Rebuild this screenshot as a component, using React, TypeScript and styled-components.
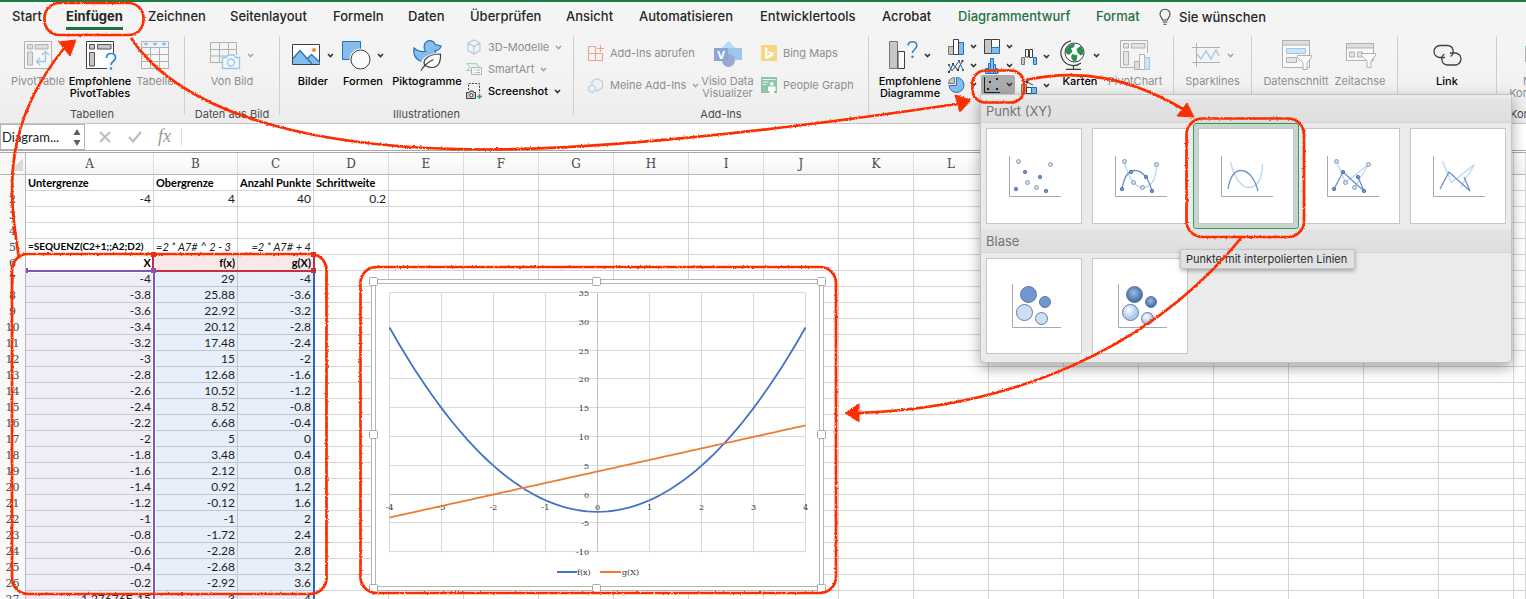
import React from "react";
import styled, { createGlobalStyle, css } from "styled-components";

const ui = `Inter, Roboto, "Liberation Sans", sans-serif`;
const slab = `"DejaVu Serif", "Liberation Serif", serif`;
const sheetFont = `Lato, "Open Sans", sans-serif`;

const Global = createGlobalStyle`
  * { box-sizing: border-box; }
  body { margin: 0; background: #fff; font-family: ${ui}; }
  button { font: inherit; color: inherit; background: none; border: 0; padding: 0; cursor: default; }
  svg { display: block; flex: none; overflow: visible; }
`;

/* ---------- frame ---------- */
const Page = styled.div`
  position: relative;
  display: flex;
  flex-direction: column;
  height: 100vh;
  overflow: hidden;
`;
const Ribbon = styled.header`
  flex: none;
  border-top: 2px solid #1b7d45;
  border-bottom: 1px solid #c6c6c6;
  background: linear-gradient(#f5f5f5, #f3f3f3 60%, #ececec);
`;
const Tabs = styled.nav`
  display: flex;
  height: 34px;
  padding-left: 12px;
`;
const Tab = styled.button<{ $w: number; $active?: boolean; $green?: boolean }>`
  flex: none;
  width: ${(p) => p.$w}px;
  height: 28px;
  text-align: left;
  white-space: nowrap;
  font-size: 13px;
  line-height: 29px;
  font-weight: ${(p) => (p.$active ? 700 : 500)};
  color: ${(p) => (p.$green ? "#1f7044" : "#262626")};
`;
const TabText = styled.span<{ $active?: boolean }>`
  display: inline-block;
  height: 28px;
  ${(p) => p.$active && css`border-bottom: 3px solid #1f7044;`}
`;
const Hint = styled.button`
  display: flex;
  align-items: center;
  gap: 8px;
  height: 29px;
  margin-left: 5px;
  font-size: 13px;
  font-weight: 500;
  color: #262626;
  white-space: nowrap;
`;
const Groups = styled.div`
  display: flex;
  height: 87px;
  overflow: hidden;
`;
const Group = styled.section<{ $w: number }>`
  flex: none;
  width: ${(p) => p.$w}px;
`;
const Divider = styled.span`
  flex: none;
  width: 1px;
  height: 79px;
  background: #cfcfcf;
`;
const GroupBody = styled.div<{ $pad?: number; $center?: boolean }>`
  display: flex;
  height: 72px;
  padding-left: ${(p) => p.$pad || 0}px;
  justify-content: ${(p) => (p.$center ? "center" : "flex-start")};
`;
const GroupLabel = styled.div<{ $left?: number }>`
  font-size: 11px;
  line-height: 13px;
  color: #4c4c4c;
  text-align: ${(p) => (p.$left ? "left" : "center")};
  padding-left: ${(p) => p.$left || 0}px;
  white-space: nowrap;
`;
const Big = styled.button<{ $w: number; $off?: boolean }>`
  display: flex;
  flex: none;
  flex-direction: column;
  align-items: center;
  width: ${(p) => p.$w}px;
  padding-top: 4px;
  font-size: 11px;
  line-height: 12px;
  white-space: nowrap;
  color: ${(p) => (p.$off ? "#8e8e8e" : "#000")};
  font-weight: ${(p) => (p.$off ? 400 : 500)};
`;
const IconRow = styled.span`
  display: flex;
  align-items: center;
  gap: 7px;
  height: 30px;
  margin-bottom: 5px;
`;
const List = styled.div<{ $w: number; $row: number; $top?: number; $pad?: number }>`
  display: grid;
  flex: none;
  align-content: start;
  grid-auto-rows: ${(p) => p.$row}px;
  width: ${(p) => p.$w}px;
  padding: ${(p) => p.$top || 0}px 0 0 ${(p) => p.$pad || 0}px;
`;
const Small = styled.button<{ $off?: boolean }>`
  display: flex;
  align-items: center;
  gap: 6px;
  font-size: 11px;
  white-space: nowrap;
  color: ${(p) => (p.$off ? "#8e8e8e" : "#000")};
  font-weight: ${(p) => (p.$off ? 400 : 500)};
`;
const Mini = styled.button<{ $on?: boolean }>`
  display: flex;
  align-items: center;
  gap: 6px;
  padding-left: 3px;
  border-radius: 2px;
  background: ${(p) => (p.$on ? "#ababab" : "none")};
`;

/* ---------- formula bar ---------- */
const FormulaBar = styled.div`
  display: flex;
  flex: none;
  align-items: center;
  height: 29px;
  background: #fff;
  border-bottom: 3px double #a8a8a8;
`;
const NameBox = styled.div`
  display: flex;
  align-items: center;
  width: 85px;
  height: 26px;
  border: 1px solid #b4b4b4;
`;
const NameInput = styled.input`
  width: 72px;
  padding: 0 0 0 1px;
  border: 0;
  background: none;
  font: 13px ${sheetFont};
  color: #222;
`;
const BarButtons = styled.div`
  display: flex;
  align-items: center;
  gap: 16px;
  width: 97px;
  padding-left: 13px;
  border-right: 1px solid #dcdcdc;
`;
const FormulaInput = styled.input`
  flex: 1;
  min-width: 0;
  height: 24px;
  margin-left: 6px;
  border: 0;
  background: #fff;
`;

/* ---------- sheet ---------- */
const Sheet = styled.main`
  position: relative;
  flex: 1;
  min-height: 0;
  overflow: hidden;
`;
const Grid = styled.table`
  table-layout: fixed;
  width: 100%;
  min-width: 1514px;
  border-collapse: separate;
  border-spacing: 0;
  font: 12px ${sheetFont};
  color: #1c1c1c;
`;
const ColHead = styled.th`
  height: 22px;
  padding: 1px 0 0;
  border-right: 1px solid #dedede;
  border-bottom: 1px solid #b8b8b8;
  background: linear-gradient(#fff, #f5f5f5);
  font: 12px ${slab};
  color: #4a4a4a;
`;
const Corner = styled(ColHead)`
  border-right-color: #b8b8b8;
  background: linear-gradient(135deg, transparent 50%, #dadada 50%) 11px 6px / 12px 12px no-repeat, #f7f7f7;
`;
const RowHead = styled.th`
  height: 16px;
  padding: 0;
  border-right: 1px solid #b8b8b8;
  background: #f8f8f8;
  font: 11px/15px ${slab};
  color: #4a4a4a;
`;
type Tint = "violet" | "rose" | "blue" | undefined;
const tints = { violet: "#f1edf8", rose: "#f8e8e8", blue: "#e7effa" };
const tintLines = { violet: "#c9c8d4", rose: "#d8c4c6", blue: "#bcc7d6" };
const Cell = styled.td<{ $tint?: Tint; $bold?: boolean; $italic?: boolean; $left?: boolean; $long?: boolean }>`
  height: 16px;
  padding: 0 2px;
  white-space: nowrap;
  line-height: 15px;
  text-align: ${(p) => (p.$left ? "left" : "right")};
  font-size: ${(p) => (p.$long ? 10 : p.$bold || p.$italic ? 11 : 12)}px;
  font-weight: ${(p) => (p.$bold ? 700 : 400)};
  font-style: ${(p) => (p.$italic ? "italic" : "normal")};
  color: ${(p) => (p.$bold ? "#000" : "#1c1c1c")};
  border-right: 1px solid ${(p) => (p.$tint ? tintLines[p.$tint] : "#d4d4d4")};
  border-bottom: 1px solid ${(p) => (p.$tint ? tintLines[p.$tint] : "#d4d4d4")};
  background: ${(p) => (p.$tint ? tints[p.$tint] : "#fff")};
`;
const Overlay = styled.svg`
  position: absolute;
  top: 0;
  left: 0;
  pointer-events: none;
`;
const ChartFrame = styled.figure`
  position: absolute;
  left: 371px;
  top: 126px;
  margin: 0;
  width: 453px;
  height: 312px;
`;

/* ---------- chart menu ---------- */
const Menu = styled.div`
  position: absolute;
  left: 980px;
  top: 94px;
  width: 532px;
  padding: 4px 0 3px;
  border: 1px solid #c4c4c4;
  border-radius: 0 0 5px 5px;
  background: #ebebeb;
  box-shadow: 0 5px 14px rgba(0, 0, 0, 0.35);
`;
const MenuTitle = styled.h2`
  height: 24px;
  margin: 0;
  padding-left: 5px;
  border-bottom: 1px solid #d3d3d3;
  background: linear-gradient(#e4e4e4, #dedede);
  font: 400 13px/25px ${ui};
  color: #757575;
`;
const MenuRow = styled.div`
  display: grid;
  grid-template-columns: repeat(5, 106px);
`;
const Choice = styled.button<{ $on?: boolean }>`
  height: 106px;
  padding: 4px;
  border: 1px solid ${(p) => (p.$on ? "#3d9a68" : "transparent")};
  border-radius: 3px;
  background: ${(p) => (p.$on ? "#c5d6cd" : "none")};
`;
const Card = styled.span`
  display: flex;
  align-items: center;
  justify-content: center;
  width: 96px;
  height: 96px;
  border: 1px solid #c6c6c6;
  background: #fff;
`;
const Tooltip = styled.div`
  position: absolute;
  left: 1180px;
  top: 249px;
  height: 20px;
  padding: 0 7px 0 5px;
  border: 1px solid #c4c4c4;
  border-radius: 2px;
  background: #e0e1e3;
  box-shadow: 0 2px 4px rgba(0, 0, 0, 0.3);
  font-size: 11px;
  line-height: 18px;
  color: #2c2c2c;
  white-space: nowrap;
`;

/* ---------- icons ---------- */
const Ico = ({ w, h, children }: { w: number; h: number; children: React.ReactNode }) => (
  <svg width={w} height={h} viewBox={`0 0 ${w} ${h}`} fill="none" aria-hidden="true">{children}</svg>
);
const Chev = ({ off }: { off?: boolean }) => (
  <Ico w={7} h={5}><path d="M1 1l2.5 2.6L6 1" stroke={off ? "#a6a6a6" : "#333"} strokeWidth="1.6" /></Ico>
);
const B = "#1f72bd", LB = "#86bdec", G = "#b1b1b1", D = "#404040";

const PivotIcon = () => (
  <Ico w={28} h={28}>
    <path d="M.5.5h27v27H.5z" stroke={G} fill="#f6f6f6" />
    <path d="M3.500 3.500h5v4.500h-5zM11 3.500h13V8H11zM3.500 11h5v13h-5z" stroke={G} fill="#dedede" />
    <path d="M13 20.500h8.500V11M16 17l-3.500 3.500L16 24M18 14l3.500-3.500L25 14" stroke="#9cc7e6" strokeWidth="1.300" />
  </Ico>
);
const PivotHelpIcon = () => (
  <Ico w={28} h={30}>
    <path d="M1 2h26v13l-6 13H1z" fill="#fff" />
    <path d="M27.500 13V1.500H.5v27H21" stroke={D} />
    <path d="M3.500 4.500h5V9h-5zM11.500 4.500H25V9H11.500zM3.500 12.500h5V26h-5z" stroke="#555" fill="#c6c6c6" />
    <path d="M20.500 18c0-3 2-4.500 4.500-4.500s4.500 1.600 4.500 4.200c0 3.500-4.500 4-4.500 7.300" stroke="#2b86cf" strokeWidth="1.700" />
    <circle cx="25" cy="28.500" r="1.200" fill="#2b86cf" />
  </Ico>
);
const TableIcon = () => (
  <Ico w={28} h={28}>
    <path d="M.5.5h27v27H.5z" stroke={G} fill="#f6f6f6" />
    <path d="M1 1h26v5H1z" fill="#eaf3fa" />
    <path d="M.5 6.500h27M.5 13.500h27M.5 20.500h27M9.500 6.500v21M18.500 6.500v21" stroke={G} />
    <path d="M2.500 2h5L5 5zM11.500 2h5L14 5zM20.500 2h5L23 5z" fill="#7db8df" />
  </Ico>
);
const TableCamIcon = () => (
  <Ico w={30} h={28}>
    <path d="M12 21.500H.5v-20h26V14M.5 8.500h26M.5 15h17M9.500 1.500v20M18.500 1.500v12" stroke={G} />
    <path d="M12.500 16.500h4l1.500-2.500h6l1.500 2.500h4v11h-17z" fill="#f0f6fb" stroke="#9cc7e6" strokeWidth="1.300" />
    <circle cx="21" cy="21.500" r="3.500" stroke="#9cc7e6" strokeWidth="1.300" />
  </Ico>
);
const PictureIcon = () => (
  <Ico w={28} h={22}>
    <path d="M.5.5h27v20H.5z" fill="#fff" stroke={D} />
    <path d="M1 14.500L8 6.500l7 8 4.500-4.500 8 8v2H1z" fill={LB} />
    <path d="M1 14.500L8 6.500l12 13.500M15.500 14.500L19.500 10.500l8 7.500" stroke={B} strokeWidth="1.200" />
    <circle cx="22" cy="6" r="2" fill="#f08a2c" />
  </Ico>
);
const ShapesIcon = () => (
  <Ico w={28} h={29}>
    <path d="M.5.5h18v18H.5z" fill={LB} stroke={B} />
    <circle cx="18.500" cy="18.500" r="11" fill="#f4f4f4" />
    <circle cx="18.500" cy="18.500" r="9.500" fill="#fafafa" stroke={D} />
  </Ico>
);
const DuckIcon = () => (
  <Ico w={29} h={31}>
    <path d="M1 8c4 3.500 8 4 11.500 3.500-2-3-2-8 1-9.700 3-2 7.500-1.300 8.800 2.700L28 6c-.5 2.500-3 4.500-6 4.500 1.500 3 1.500 6 0 8.500C18 23 9 23 4 19 1 16 .5 11 1 8z" fill={LB} stroke={B} strokeWidth="1.200" />
    <path d="M11 27c-4-5.500 1-12 17.500-13 .5 9-2 15-9 15-3 0-5-.6-6.500-1.500z" fill="#fff" stroke="#f4f4f4" strokeWidth="3" />
    <path d="M12 26c-3-6 2-11.500 15.500-12 .3 8-2 13.500-8.500 13.500-2 0-4-.5-5.500-1.500zM8 30.500c3-5 7-8.500 12.500-11" fill="#fff" stroke={D} strokeWidth="1.200" />
  </Ico>
);
const CubeIcon = () => (
  <Ico w={16} h={16}><path d="M8 1l6 3v7.500L8 15l-6-3.500V4zM2 4l6 3.500L14 4M8 7.500V15" stroke="#a9cbe6" strokeWidth="1.200" /></Ico>
);
const SmartIcon = () => (
  <Ico w={16} h={16}>
    <path d="M.5 2.500h10l3 3.500M.5 2.500L4 6 .5 9.500H5" fill="#d9ecdf" stroke="#a6d3b4" />
    <path d="M5.500 6.500h10v7h-10zM7.500 9h1M10 9h4M7.500 11.500h1M10 11.500h4" fill="#fafafa" stroke={G} />
  </Ico>
);
const ShotIcon = () => (
  <Ico w={16} h={17}>
    <path d="M2.500 7V.5h11V10" stroke="#444" strokeDasharray="2 1.300" />
    <path d="M.5 9.500h2.500l1-1.500h3l1 1.500h1.500v6h-9z" fill="#c9c9c9" stroke={D} />
    <circle cx="5.300" cy="12.300" r="1.600" fill="#fff" stroke={D} />
    <path d="M11 13.500h5M13.500 11v5" stroke="#2aa457" strokeWidth="1.500" />
  </Ico>
);
const AddinGetIcon = () => (
  <Ico w={16} h={17}><path d="M7.500 1.500h-7v14h14v-7H.5M7.500 1.500v14M12.500 0v7M9 3.500h7" stroke="#eda68e" strokeWidth="1.200" /></Ico>
);
const AddinMineIcon = () => (
  <Ico w={16} h={16}>
    <path d="M4 8V4.500L9 1.500l5.500 3v6L9.500 14 8 13" stroke="#b5d0e8" strokeWidth="1.200" />
    <path d="M4 8l3.500 2v3.500L4 15.500.8 13.500V10z" stroke="#b5d0e8" strokeWidth="1.200" />
  </Ico>
);
const VisioIcon = () => (
  <Ico w={28} h={28}>
    <path d="M14.500 0l8 8-8 8-8-8z" fill="#b4dcf3" />
    <path d="M14 7h14v12H14z" fill="#9dc7ec" />
    <circle cx="14.500" cy="19.500" r="6.500" fill="#9aa9cf" />
    <path d="M0 7h14v13H0z" fill="#8ba5d6" />
    <text x="7" y="17.500" textAnchor="middle" fontFamily={ui} fontWeight="700" fontSize="11" fill="#fff">V</text>
  </Ico>
);
const BingIcon = () => (
  <Ico w={16} h={16}><path d="M0 0h16v16H0z" fill="#f6d680" /><path d="M4 2l2.300 1v7.700L9.500 9 8 8.200 7.200 6l5.300 2v2.500L6.300 14 4 12.800z" fill="#fff" /></Ico>
);
const PeopleIcon = () => (
  <Ico w={16} h={16}>
    <path d="M0 0h16v16H0z" fill="#8fc4ac" />
    <path d="M1.500 2.500h13M1.500 5h6M1.500 7.500h4" stroke="#e6f3ed" />
    <circle cx="10.800" cy="6.800" r="1.900" fill="#fff" />
    <path d="M7 9.500h7.500V14H13v2H8.500v-2H7z" fill="#fff" />
  </Ico>
);
const RecChartIcon = () => (
  <Ico w={28} h={29}>
    <path d="M.5.5h8v27h-8z" fill="#c6c6c6" stroke="#777" />
    <path d="M9 10.500h6.500v17H9z" fill="#fafafa" stroke={D} />
    <path d="M19 4.500C19.200 2 21 .8 23.500.8s4.300 1.500 4.300 4c0 3.200-4.300 3.700-4.300 7.200" stroke="#2b86cf" strokeWidth="1.600" />
    <circle cx="23.500" cy="15.800" r="1.200" fill="#2b86cf" />
  </Ico>
);
const ColumnIcon = () => (
  <Ico w={16} h={16}><path d="M.5 7.500h5v8h-5z" fill="#c6c6c6" stroke="#777" /><path d="M10.500 3.500h5v12h-5z" fill={LB} stroke={B} /><path d="M5.500.5h5v15h-5z" fill="#fff" stroke={D} /></Ico>
);
const LineIcon = () => (
  <Ico w={16} h={14}><path d="M1 13l4-8 4.500 6L14.500 2" stroke={D} /><path d="M1 6l3 6 7-10 4 9" stroke={B} /><path d="M0 12h2v2H0zM4 4h2v2H4zM9 10h2v2H9zM13.500 1h2v2h-2z" fill={D} /><path d="M0 5h2v2H0zM10 1h2v2h-2zM14 10h2v2h-2z" fill={B} /></Ico>
);
const PieIcon = () => (
  <Ico w={16} h={16}><path d="M8.500.5a7.500 7.500 0 11-7.500 8h7.500z" fill={LB} stroke={B} /><path d="M6.500 6.500h-6A6 6 0 016.500.5z" fill="#c6c6c6" stroke="#777" /></Ico>
);
const TreeIcon = () => (
  <Ico w={16} h={16}><path d="M.5.500h7v14h-7z" fill="#c6c6c6" stroke={D} /><path d="M7.500.5h8v8h-8z" fill="#fff" stroke={D} /><path d="M7.500 8.500h8v6h-8z" fill={LB} stroke={B} /></Ico>
);
const HistIcon = () => (
  <Ico w={16} h={16}><path d="M1.500 15.500v-5h3v-5h2v-5h3v6h2v4h2v5z" fill={LB} stroke={B} /><path d="M4.500 10v5M6.500 6v9M9.500 7v8M11.500 11v4" stroke={B} /></Ico>
);
const ScatterIcon = () => (
  <Ico w={16} h={16}><path d="M.5 0v15.500H16" stroke="#222" /><path d="M3 11h2v2H3zM5 4h2v2H5zM12 1h2v2h-2zM12 11h2v2h-2z" fill="#222" /><path d="M3 6h2v2H3zM8 8h2v2H8zM12 6h2v2h-2z" fill="#7dc0f5" /></Ico>
);
const FallIcon = () => (
  <Ico w={16} h={16}><path d="M.5 8.500h3v7h-3z" fill="#c6c6c6" stroke="#777" /><path d="M4.500.5h3v7.500h-3zM8.500.5h3v8h-3z" fill="#fff" stroke={D} /><path d="M12.500 8.500h3v7h-3z" fill={LB} stroke={B} /></Ico>
);
const ComboIcon = () => (
  <Ico w={16} h={16}><path d="M.5 6.500h5v9h-5z" fill="#c6c6c6" stroke="#777" /><path d="M5.500 9.500h5v6h-5z" fill="#fff" stroke={D} /><path d="M10.500 9.500h5v6h-5z" fill={LB} stroke={B} /><path d="M1 2l5 2 6 3" stroke={D} /><circle cx="6" cy="4" r="1.500" fill={D} /></Ico>
);
const GlobeIcon = () => (
  <Ico w={25} h={30}>
    <circle cx="13.500" cy="12.500" r="9.500" fill="#fff" stroke={D} />
    <path d="M5 9c2-3.500 5-5.500 9-5l-1 3-3 1.500 1.500 3L8 15l-3.500-2zM15.500 9l4-3c2.500 2 3.500 5 3 8l-3 1.500-3-3zM11 14l5.500 1.500-1 5-3 1-2.500-4z" fill="#2d8f4e" />
    <path d="M10 .8A12.500 12.500 0 1020 23M12.500 25v4M5 29.300h15" stroke={D} strokeWidth="1.200" />
  </Ico>
);
const PivotChartIcon = () => (
  <Ico w={30} h={30}>
    <path d="M14 27.500H.5V.5h27V13" stroke={G} />
    <path d="M3.500 3.500h5V8h-5zM11.500 3.500H25V8H11.500zM3.500 11.500h5V25h-5z" stroke={G} fill="#e4e4e4" />
    <path d="M14.500 21.500h5v8h-5z" fill="#dcdcdc" stroke={G} /><path d="M19.500 14.500h5v15h-5z" fill="#fafafa" stroke={G} /><path d="M24.500 17.500h5v12h-5z" fill="#cfe3f3" stroke="#9cc7e6" />
  </Ico>
);
const SparkIcon = () => (
  <Ico w={28} h={24}><path d="M0 4.500h28M0 19.500h28M4.500 0v24" stroke={G} /><path d="M5 11l4 5 5-8 5 8 5-9 3 6" stroke="#9cc7e6" strokeWidth="1.300" /></Ico>
);
const Funnel = ({ x, y }: { x: number; y: number }) => (
  <path transform={`translate(${x} ${y})`} d="M0 0h14v2L9.500 7.500V14H5.500V7.500L0 2z" fill="#fafafa" stroke={G} />
);
const SlicerIcon = () => (
  <Ico w={28} h={30}>
    <path d="M.5.5h27v27H.5z" fill="#fafafa" stroke={G} /><path d="M.5.5h27V5H.5z" fill="#dedede" stroke={G} />
    <path d="M4.500 8.500h19v5h-19z" fill="#cfe3f3" stroke="#9cc7e6" /><path d="M4.500 17.500h10v5h-10z" fill="#e4e4e4" stroke={G} /><Funnel x={15.500} y={15.500} />
  </Ico>
);
const TimelineIcon = () => (
  <Ico w={28} h={24}>
    <path d="M.5.5h27v17H.5z" fill="#fafafa" stroke={G} /><path d="M.5.5h27V5H.5z" fill="#dedede" stroke={G} />
    <path d="M3.500 9h5v5h-5zM11.500 9h5v5h-5z" fill="#e4e4e4" stroke={G} /><Funnel x={15.500} y={10.500} />
  </Ico>
);
const LinkIcon = () => (
  <Ico w={29} h={21}>
    <path d="M12 12.500H7a6 6 0 010-12h7.500a6 6 0 013 11" stroke={D} strokeWidth="1.300" />
    <path d="M17 8h5a6 6 0 010 12h-7.500a6 6 0 01-3-11" stroke={D} strokeWidth="1.300" />
  </Ico>
);
const CommentIcon = () => (
  <Ico w={28} h={28}><path d="M.5 6.500h27v14H12l-5 6v-6H.5z" stroke={G} /><path d="M0 6h14" stroke="#8fd0a8" strokeWidth="2" /></Ico>
);
const BulbIcon = () => (
  <Ico w={12} h={16}><path d="M3.500 11C3.500 9 1 8 1 5.200a5 5 0 0110 0C11 8 8.500 9 8.500 11zM3.700 13h4.600M4.500 15.200h3" stroke="#444" strokeWidth="1.100" /></Ico>
);

/* ---------- scatter thumbnails ---------- */
const DK = "#6d92c6", LT = "#b9d6f0";
const darkPts = [[7, 34], [16, 17], [31, 22], [37, 36]];
const lightPts = [[9.5, 6.500], [18.500, 27.500], [27.500, 32.500], [41.500, 9.500]];
type Kind = "dots" | "curveDots" | "curve" | "lineDots" | "line";
const Thumb = ({ kind }: { kind: Kind }) => {
  const dots = kind === "dots" || kind.endsWith("Dots");
  return (
    <Ico w={50} h={42}>
      <path d="M.5 1v40.500H52" stroke="#a9a9a9" />
      {kind.startsWith("curve") && (
        <>
          <path d="M9.500 7C13 22 20 32.500 28 32.500S41.500 24 41.500 9" stroke={LT} strokeWidth="1.300" />
          <path d="M7 34C9 22 13 15.500 20 15.500c8 0 14 9 17 20.500" stroke={DK} strokeWidth="1.300" />
        </>
      )}
      {kind.startsWith("line") && (
        <>
          <path d="M9.500 6.500l9 21 23-18-14 23" stroke={LT} strokeWidth="1.300" />
          <path d="M7 34l9-17 21 19-6-14" stroke={DK} strokeWidth="1.300" />
        </>
      )}
      {dots && darkPts.map(([x, y]) => <circle key={x} cx={x} cy={y} r="1.700" fill={DK} stroke="#4a6796" strokeWidth=".8" />)}
      {dots && lightPts.map(([x, y]) => <circle key={x} cx={x} cy={y} r="2" fill="#cfe1f4" stroke="#6c86ad" strokeWidth=".8" />)}
    </Ico>
  );
};
const BubbleThumb = ({ shiny }: { shiny?: boolean }) => {
  const d = shiny ? "url(#bubbleDark)" : "#7097cf";
  const l = shiny ? "url(#bubbleLight)" : "#cbdff5";
  return (
    <Ico w={44} h={46}>
      <defs>
        <radialGradient id="bubbleDark" cx=".45" cy=".4"><stop offset="0" stopColor="#9cbde6" /><stop offset="1" stopColor="#4a72ad" /></radialGradient>
        <radialGradient id="bubbleLight" cx=".4" cy=".35"><stop offset="0" stopColor="#fff" /><stop offset="1" stopColor="#a9c9ee" /></radialGradient>
      </defs>
      <path d="M.5 1v43.500H49" stroke="#a9a9a9" />
      <g stroke="#5a6f94" strokeWidth=".9">
        <circle cx="16.500" cy="11.500" r="8" fill={d} /><circle cx="33" cy="19" r="5.500" fill={d} />
        <circle cx="12.500" cy="29.500" r="8" fill={l} /><circle cx="29.500" cy="35.500" r="6" fill={l} />
      </g>
    </Ico>
  );
};

/* ---------- data ---------- */
const tabs: { t: string; w: number; on?: boolean; green?: boolean }[] = [
  { t: "Start", w: 54 }, { t: "Einfügen", w: 82, on: true }, { t: "Zeichnen", w: 82 }, { t: "Seitenlayout", w: 103 },
  { t: "Formeln", w: 75 }, { t: "Daten", w: 62 }, { t: "Überprüfen", w: 96 }, { t: "Ansicht", w: 73 },
  { t: "Automatisieren", w: 121 }, { t: "Entwicklertools", w: 122 }, { t: "Acrobat", w: 76 },
  { t: "Diagrammentwurf", w: 138, green: true }, { t: "Format", w: 58, green: true },
];
const cols = "ABCDEFGHIJKLMNOPQRS".split("");
const series = Array.from({ length: 20 }, (_, i) => Math.round((-4 + i * 0.2) * 10) / 10);
const f = (x: number) => Math.round((2 * x * x - 3) * 100) / 100;
const g = (x: number) => Math.round((2 * x + 4) * 100) / 100;

type CellData = { v: string | number; bold?: boolean; italic?: boolean; left?: boolean; long?: boolean };
const head = (v: string, left = true): CellData => ({ v, bold: true, left });
const cells: Record<number, CellData[]> = {
  1: ["Untergrenze", "Obergrenze", "Anzahl Punkte", "Schrittweite"].map((v) => head(v)),
  2: [-4, 4, 40, 0.2].map((v) => ({ v })),
  5: [{ ...head("=SEQUENZ(C2+1;;A2;D2)"), long: true }, { v: "=2 * A7# ^ 2 - 3", italic: true, left: true }, { v: "=2 * A7# + 4", italic: true }],
  6: [head("X", false), head("f(x)", false), head("g(X)", false)],
  27: [{ v: "1.27676E-15" }, { v: -3 }, { v: 4 }],
};
series.forEach((x, i) => { cells[7 + i] = [{ v: x }, { v: f(x) }, { v: g(x) }]; });
const tintOf = (row: number, col: number): Tint => {
  if (row === 6 && (col === 1 || col === 2)) return "rose";
  if (row >= 7 && col === 0) return "violet";
  if (row >= 7 && col < 3) return "blue";
  return undefined;
};

/* ---------- chart ---------- */
const px = (x: number) => 226.5 + x * 52;
const py = (y: number) => 215.5 - y * 5.76;
const curve = (fn: (x: number) => number) =>
  Array.from({ length: 81 }, (_, i) => -4 + i / 10).map((x, i) => `${i ? "L" : "M"}${px(x)} ${py(fn(x))}`).join("");

const Chart = () => (
  <ChartFrame>
    <svg width="454" height="314" viewBox="0 0 454 314" role="img" aria-label="f(x), g(X)" fill="none" fontFamily={slab} fontSize="8">
      <path d="M.5.5h452v311H.5z" fill="#fff" stroke="#b5b5b5" />
      <path d="M4.500 4.500h444v303H4.500z" stroke="#b5b5b5" />
      {[35, 30, 25, 20, 15, 10, 5, 0, -5, -10].map((v) => (
        <React.Fragment key={v}>
          <path d={`M${px(-4)} ${Math.round(py(v)) - 0.5}H${px(4)}`} stroke={v ? "#d9d9d9" : "#bfbfbf"} />
          <text x="218" y={py(v) + 3} textAnchor="end" fill="#333">{v}</text>
        </React.Fragment>
      ))}
      {[-4, -3, -2, -1, 0, 1, 2, 3, 4].map((v) => (
        <React.Fragment key={v}>
          <path d={`M${px(v)} ${py(35)}V${py(-10)}`} stroke={v ? "#d9d9d9" : "#bfbfbf"} />
          <text x={px(v)} y="231" textAnchor="middle" fill="#333">{v}</text>
        </React.Fragment>
      ))}
      <path d={curve((x) => 2 * x * x - 3)} stroke="#4472c4" strokeWidth="1.800" />
      <path d={curve((x) => 2 * x + 4)} stroke="#ed7d31" strokeWidth="1.800" />
      <path d="M186 293h20" stroke="#4472c4" strokeWidth="2" />
      <text x="206" y="296" fill="#333">f(x)</text>
      <path d="M229 293h21" stroke="#ed7d31" strokeWidth="2" />
      <text x="251" y="296" fill="#333">g(X)</text>
      {[[2, 2], [225, 2], [450, 2], [2, 155], [450, 155], [2, 309], [225, 309], [450, 309]].map(([x, y]) => (
        <rect key={`${x}-${y}`} x={x - 3.5} y={y - 3.5} width="8" height="8" rx="1" fill="#fff" stroke="#a9a9a9" />
      ))}
    </svg>
  </ChartFrame>
);

const Ranges = () => (
  <Overlay width="320" height="460" viewBox="0 0 320 460" fill="none" aria-hidden="true">
    <path d="M26 119.500h127" stroke="#fff" />
    <path d="M155.500 119V460M152.500 119V460" stroke="#fff" opacity=".8" />
    <path d="M26 118h127M154 118V460" stroke="#8253b8" strokeWidth="2" />
    <path d="M314 118V460" stroke="#2d62c0" strokeWidth="2" />
    <path d="M156 118h156M153 104v11M314 104v11" stroke="#c4313e" strokeWidth="2" />
    <path d="M151 99h5v5h-5zM311 99h5v5h-5zM311 115h5v5h-5z" fill="#c4313e" />
    <path d="M151 115h5v5h-5zM26 115h2v5h-2z" fill="#8253b8" />
  </Overlay>
);

const Marks = () => (
  <Overlay width="1526" height="599" viewBox="0 0 1526 599" fill="none" aria-hidden="true">
    <defs>
      <filter id="chalk" filterUnits="userSpaceOnUse" x="0" y="0" width="1526" height="599">
        <feTurbulence type="fractalNoise" baseFrequency=".6" numOctaves="2" seed="4" />
        <feDisplacementMap in="SourceGraphic" scale="2.500" xChannelSelector="R" yChannelSelector="G" />
      </filter>
    </defs>
    <g stroke="#fb2f05" strokeWidth="2.700" filter="url(#chalk)">
      <rect x="44.500" y="3" width="99" height="32" rx="15" />
      <rect x="12" y="254" width="314.500" height="340" rx="16" />
      <rect x="360.500" y="267" width="475.500" height="326" rx="16" />
      <rect x="972.500" y="70.500" width="51.500" height="32" rx="13" />
      <rect x="1186.500" y="118.500" width="117.500" height="118.500" rx="16" />
      <path d="M19 258C8 190 2 125 65 47" />
      <path d="M131 38C175 105 290 149 485 149.500C600 149 760 133 957 104" />
      <path d="M1026 80C1080 68 1130 78 1183 109" />
      <path d="M1241 238C1150 350 1010 408 858 413" />
      <g fill="#fb2f05" strokeWidth="1">
        <path d="M59 42l17-2-6 16z" />
        <path d="M955 95l16 5-11 12z" />
        <path d="M1187 103l7 14-17-1z" />
        <path d="M859 404l-14 9 14 9z" />
      </g>
    </g>
  </Overlay>
);

export default function App() {
  return (
    <Page>
      <Global />
      <Ribbon>
        <Tabs>
          {tabs.map((t) => (
            <Tab key={t.t} $w={t.w} $active={t.on} $green={t.green}><TabText $active={t.on}>{t.t}</TabText></Tab>
          ))}
          <Hint><BulbIcon />Sie wünschen</Hint>
        </Tabs>
        <Groups>
          <Group $w={184}>
            <GroupBody $pad={9}>
              <Big $w={58} $off><IconRow><PivotIcon /></IconRow>PivotTable</Big>
              <Big $w={66}><IconRow><PivotHelpIcon /></IconRow>Empfohlene<br />PivotTables</Big>
              <Big $w={44} $off><IconRow><TableIcon /></IconRow>Tabelle</Big>
            </GroupBody>
            <GroupLabel>Tabellen</GroupLabel>
          </Group>
          <Divider />
          <Group $w={94}>
            <GroupBody $center>
              <Big $w={70} $off><IconRow><TableCamIcon /><Chev off /></IconRow>Von Bild</Big>
            </GroupBody>
            <GroupLabel>Daten aus Bild</GroupLabel>
          </Group>
          <Divider />
          <Group $w={293}>
            <GroupBody $pad={8}>
              <Big $w={50}><IconRow><PictureIcon /><Chev /></IconRow>Bilder</Big>
              <Big $w={50}><IconRow><ShapesIcon /><Chev /></IconRow>Formen</Big>
              <Big $w={78}><IconRow><DuckIcon /></IconRow>Piktogramme</Big>
              <List $w={106} $row={22}>
                <Small $off><CubeIcon />3D-Modelle<Chev off /></Small>
                <Small $off><SmartIcon />SmartArt<Chev off /></Small>
                <Small><ShotIcon />Screenshot<Chev /></Small>
              </List>
            </GroupBody>
            <GroupLabel>Illustrationen</GroupLabel>
          </Group>
          <Divider />
          <Group $w={294}>
            <GroupBody $pad={14}>
              <List $w={106} $row={32} $top={1}>
                <Small $off><AddinGetIcon />Add-Ins abrufen</Small>
                <Small $off><AddinMineIcon />Meine Add-Ins<Chev off /></Small>
              </List>
              <Big $w={67} $off><IconRow><VisioIcon /></IconRow>Visio Data<br />Visualizer</Big>
              <List $w={106} $row={32} $top={1}>
                <Small $off><BingIcon />Bing Maps</Small>
                <Small $off><PeopleIcon />People Graph</Small>
              </List>
            </GroupBody>
            <GroupLabel>Add-Ins</GroupLabel>
          </Group>
          <Divider />
          <Group $w={304}>
            <GroupBody $pad={8}>
              <Big $w={66}><IconRow><RecChartIcon /><Chev /></IconRow>Empfohlene<br />Diagramme</Big>
              <List $w={38} $row={19} $top={1} $pad={2}>
                <Mini aria-label="Säule"><ColumnIcon /><Chev /></Mini>
                <Mini aria-label="Linie"><LineIcon /><Chev /></Mini>
                <Mini aria-label="Kreis"><PieIcon /><Chev /></Mini>
              </List>
              <List $w={34} $row={19} $top={1}>
                <Mini aria-label="Hierarchie"><TreeIcon /><Chev /></Mini>
                <Mini aria-label="Statistik"><HistIcon /><Chev /></Mini>
                <Mini aria-label="Punkt" $on><ScatterIcon /><Chev /></Mini>
              </List>
              <List $w={42} $row={29} $top={6} $pad={3}>
                <Mini aria-label="Wasserfall"><FallIcon /><Chev /></Mini>
                <Mini aria-label="Kombi"><ComboIcon /><Chev /></Mini>
              </List>
              <Big $w={46}><IconRow><GlobeIcon /><Chev /></IconRow>Karten</Big>
              <Big $w={64} $off><IconRow><PivotChartIcon /></IconRow>PivotChart</Big>
            </GroupBody>
          </Group>
          <Divider />
          <Group $w={77}>
            <GroupBody $center>
              <Big $w={66} $off><IconRow><SparkIcon /><Chev off /></IconRow>Sparklines</Big>
            </GroupBody>
          </Group>
          <Divider />
          <Group $w={145}>
            <GroupBody $pad={8}>
              <Big $w={72} $off><IconRow><SlicerIcon /></IconRow>Datenschnitt</Big>
              <Big $w={56} $off><IconRow><TimelineIcon /></IconRow>Zeitachse</Big>
            </GroupBody>
          </Group>
          <Divider />
          <Group $w={98}>
            <GroupBody $center>
              <Big $w={60}><IconRow><LinkIcon /></IconRow>Link</Big>
            </GroupBody>
          </Group>
          <Divider />
          <Group $w={90}>
            <GroupBody $pad={12}>
              <Big $w={60} $off><IconRow><CommentIcon /></IconRow>Neuer<br />Kommentar</Big>
            </GroupBody>
            <GroupLabel $left={13}>Kommentare</GroupLabel>
          </Group>
        </Groups>
      </Ribbon>

      <FormulaBar>
        <NameBox>
          <NameInput aria-label="Namenfeld" defaultValue="Diagram..." />
          <Ico w={8} h={20}><path d="M4 2l3.500 6h-7zM4 19l3.500-6h-7z" fill="#5c5c5c" /></Ico>
        </NameBox>
        <BarButtons>
          <button aria-label="Abbrechen"><Ico w={14} h={12}><path d="M2 1l10 10M12 1L2 11" stroke="#bdbdbd" strokeWidth="2" /></Ico></button>
          <button aria-label="Eingeben"><Ico w={14} h={12}><path d="M1 6l4 4.500L13 1" stroke="#bdbdbd" strokeWidth="2.200" /></Ico></button>
          <button aria-label="Funktion einfügen">
            <Ico w={16} h={18}><text x="0" y="14" fontFamily="Liberation Serif, serif" fontStyle="italic" fontSize="18" fill="#999">fx</text></Ico>
          </button>
        </BarButtons>
        <FormulaInput aria-label="Formel" />
      </FormulaBar>

      <Sheet>
        <Grid>
          <colgroup>
            <col width="26" /><col width="128" /><col width="84" /><col width="76" />
            {cols.slice(3).map((c) => <col key={c} width="75" />)}
            <col />
          </colgroup>
          <thead>
            <tr><Corner />{cols.map((c) => <ColHead key={c} scope="col">{c}</ColHead>)}<ColHead /></tr>
          </thead>
          <tbody>
            {Array.from({ length: 27 }, (_, i) => i + 1).map((r) => (
              <tr key={r}>
                <RowHead scope="row">{r}</RowHead>
                {cols.map((c, ci) => {
                  const d = cells[r]?.[ci];
                  return (
                    <Cell key={c} $tint={tintOf(r, ci)} $bold={d?.bold} $italic={d?.italic} $left={d?.left} $long={d?.long}>{d?.v}</Cell>
                  );
                })}
                <Cell />
              </tr>
            ))}
          </tbody>
        </Grid>
        <Ranges />
        <Chart />
      </Sheet>

      <Menu>
        <MenuTitle>Punkt (XY)</MenuTitle>
        <MenuRow>
          {(["dots", "curveDots", "curve", "lineDots", "line"] as Kind[]).map((k) => (
            <Choice key={k} aria-label={k} $on={k === "curve"}><Card><Thumb kind={k} /></Card></Choice>
          ))}
        </MenuRow>
        <MenuTitle>Blase</MenuTitle>
        <MenuRow>
          <Choice aria-label="Blase"><Card><BubbleThumb /></Card></Choice>
          <Choice aria-label="3D-Blase"><Card><BubbleThumb shiny /></Card></Choice>
        </MenuRow>
      </Menu>
      <Tooltip role="tooltip">Punkte mit interpolierten Linien</Tooltip>
      <Marks />
    </Page>
  );
}
